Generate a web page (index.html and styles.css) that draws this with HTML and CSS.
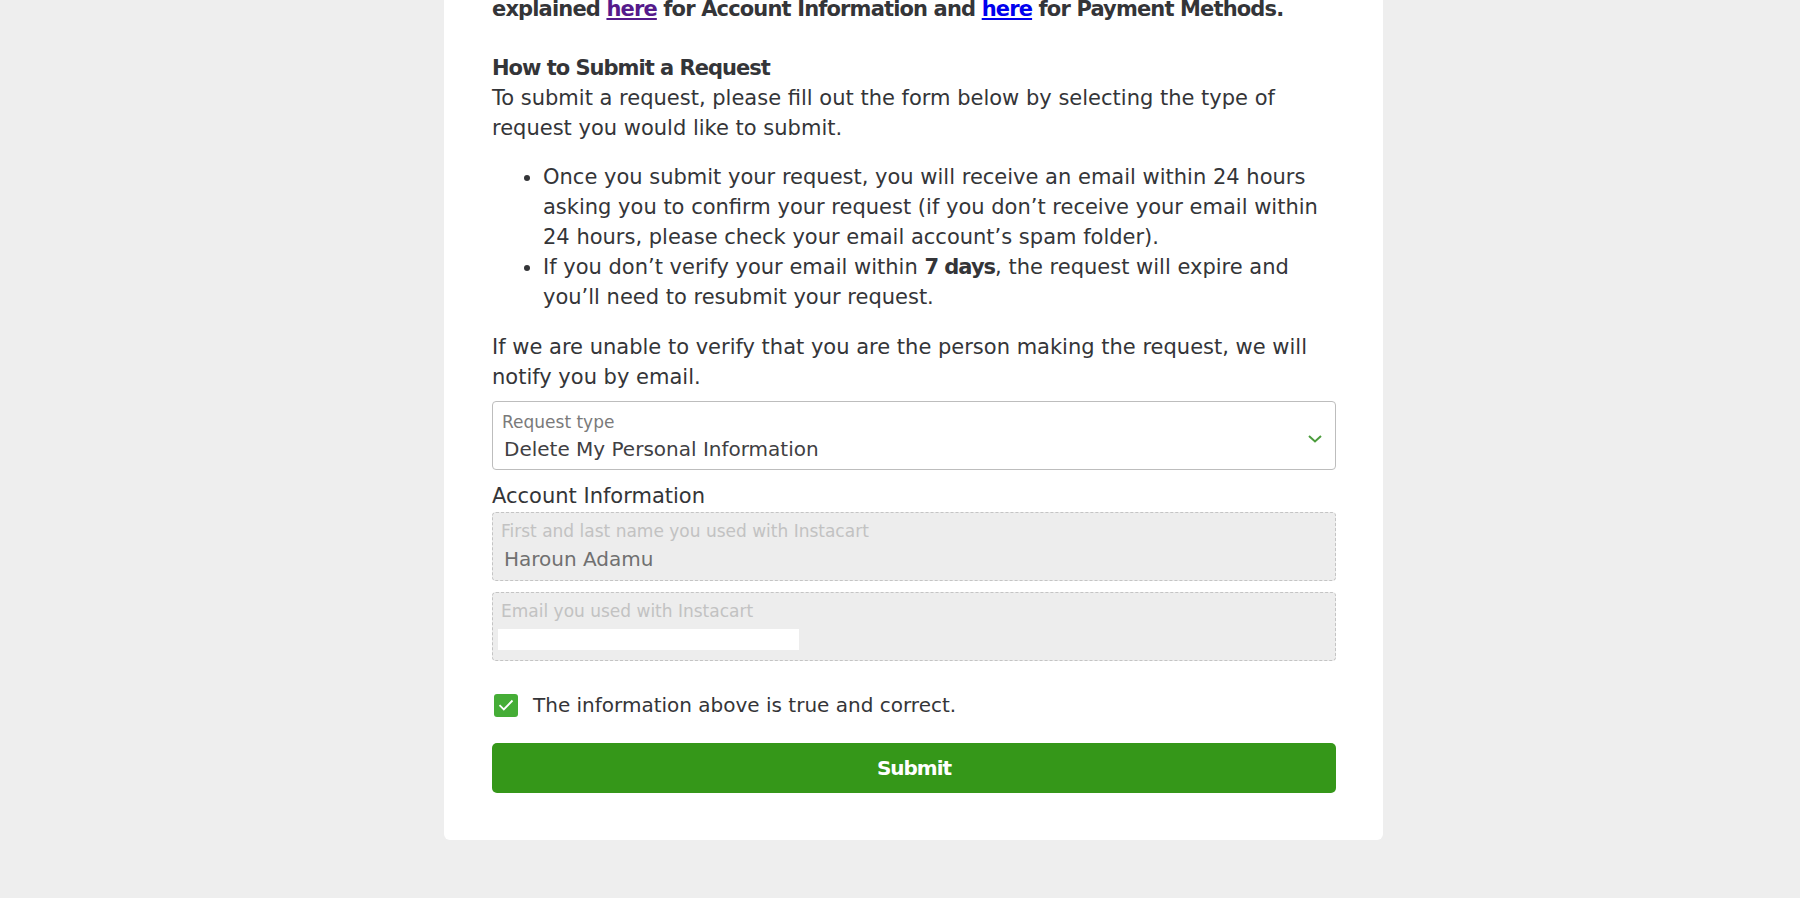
FILE: index.html
```html
<!DOCTYPE html>
<html lang="en">
<head>
    <meta charset="UTF-8">
    <meta name="viewport" content="width=device-width, initial-scale=1.0">
    <title>Privacy Request</title>
    <link rel="stylesheet" href="styles.css">
</head>
<body>
    <div id="card">
        <p class="lead"><strong>explained <a class="visited" href="#">here</a> for Account Information and <a href="#">here</a> for Payment Methods.</strong></p>

        <h2>How to Submit a Request</h2>
        <p class="intro">To submit a request, please fill out the form below by selecting the type of request you would like to submit.</p>

        <ul>
            <li>Once you submit your request, you will receive an email within 24 hours asking you to confirm your request (if you don’t receive your email within 24 hours, please check your email account’s spam folder).</li>
            <li>If you don’t verify your email within <strong>7 days</strong>, the request will expire and you’ll need to resubmit your request.</li>
        </ul>

        <p class="notice">If we are unable to verify that you are the person making the request, we will notify you by email.</p>

        <form id="request-form">
            <div class="select">
                <span class="field-label">Request type</span>
                <span class="field-value">Delete My Personal Information</span>
                <svg class="chevron" width="14" height="8" viewBox="0 0 14 8">
                    <path d="M1 1l6 5.5L13 1" fill="none" stroke="#4b9c3c" stroke-width="2"/>
                </svg>
            </div>

            <h3>Account Information</h3>

            <div class="field disabled">
                <span class="field-label">First and last name you used with Instacart</span>
                <span class="field-value">Haroun Adamu</span>
            </div>

            <div class="field disabled">
                <span class="field-label">Email you used with Instacart</span>
                <span class="redacted"></span>
            </div>

            <label class="confirm">
                <span class="checkbox">
                    <svg width="16" height="12" viewBox="0 0 16 12">
                        <path d="M1.5 6.2l4.3 4.3L14.5 1.5" fill="none" stroke="#fff" stroke-width="1.8"/>
                    </svg>
                </span>
                The information above is true and correct.
            </label>

            <button type="button" id="submit">Submit</button>
        </form>
    </div>
</body>
</html>
```

FILE: styles.css
```css
:root{
    --text-color: #343538;
    --green: #359719;
    --light-green: #45ad36;
    --bg-color: #eeeeee;
}

*{
    box-sizing: border-box;
    margin: 0;
    font-family: 'DejaVu Sans', sans-serif;
}

body{
    background-color: var(--bg-color);
    color: var(--text-color);
    overflow: hidden;
}

#card{
    width: 939px;
    margin: -6px 0 0 444px;
    padding: 0 47px 47px 48px;
    background-color: white;
    border-radius: 0 0 6px 6px;
    font-size: 21px;
    line-height: 30px;
}

strong, h2, #submit{
    font-weight: 700;
    letter-spacing: -1px;
}

.lead{
    margin-bottom: 29px;
}

.lead strong{
    letter-spacing: -0.85px;
}

a{
    color: #0000ee;
}

a.visited{
    color: #551a8b;
}

h2{
    font-size: 21px;
    line-height: 30px;
}

ul{
    margin: 19px 0 20px;
    padding-left: 51px;
}

.notice{
    margin-bottom: 9px;
}

.select, .field{
    position: relative;
    display: flex;
    flex-direction: column;
    height: 69px;
    padding: 10px 9px 0;
    border: 1px solid #bdbdbd;
    border-radius: 4px;
}

.field-label{
    font-size: 17px;
    line-height: 20px;
    color: #7a7a7a;
}

.field-value{
    margin-top: 4px;
    padding-left: 2px;
    font-size: 20px;
    line-height: 26px;
    color: #3f4043;
}

.chevron{
    position: absolute;
    right: 13px;
    top: 33px;
}

h3{
    margin: 11px 0 1px;
    font-size: 21px;
    line-height: 30px;
    font-weight: 400;
}

.field{
    border-style: dashed;
    border-color: #c4c4c4;
    background-color: #ededed;
    margin-bottom: 11px;
    padding-top: 8px;
    padding-left: 8px;
}

.field .field-label{
    color: #c2c2c2;
}

.field .field-value{
    margin-top: 5px;
    padding-left: 3px;
    color: #707070;
}

.redacted{
    display: block;
    width: 301px;
    height: 21px;
    margin: 8px 0 0 -3px;
    background-color: white;
}

.confirm{
    display: flex;
    align-items: center;
    gap: 15px;
    margin: 32px 0 26px 2px;
    font-size: 20px;
    line-height: 24px;
}

.checkbox{
    display: flex;
    align-items: center;
    justify-content: center;
    width: 24px;
    height: 23px;
    border-radius: 3px;
    background-color: var(--light-green);
}

#submit{
    display: block;
    width: 100%;
    height: 50px;
    border: none;
    border-radius: 5px;
    background-color: var(--green);
    color: white;
    font-size: 20px;
}
```
